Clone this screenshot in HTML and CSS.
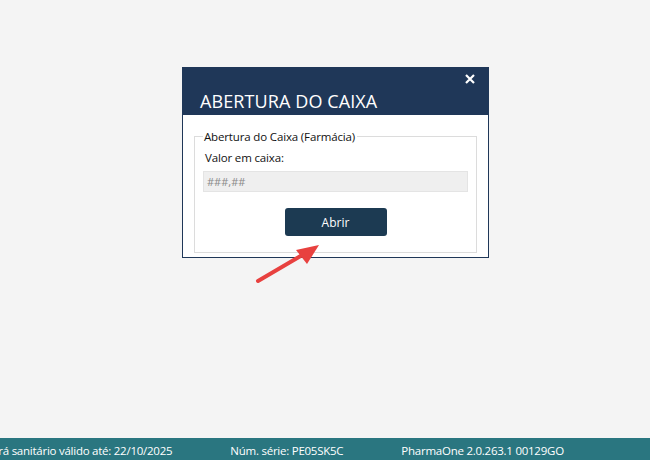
FILE: index.html
```html
<!DOCTYPE html>
<html lang="pt-BR">
<head>
    <meta charset="UTF-8">
    <title>Abertura do Caixa</title>
    <link rel="stylesheet" href="styles.css">
</head>
<body>
    <div class="desktop">
        <div class="dialog">
            <div class="dialog-header">
                <svg class="close" width="10" height="10" viewBox="0 0 10 10">
                    <path d="M1 1 L9 9 M9 1 L1 9" stroke="#fff" stroke-width="2.2"/>
                </svg>
                <div class="dialog-title">ABERTURA DO CAIXA</div>
            </div>
            <div class="dialog-body">
                <fieldset class="group">
                    <legend>Abertura do Caixa (Farmácia)</legend>
                    <label class="field-label">Valor em caixa:</label>
                    <div class="input">###,##</div>
                    <div class="actions">
                        <button class="btn">Abrir</button>
                    </div>
                </fieldset>
            </div>
        </div>

        <!-- annotation arrow -->
        <svg class="arrow" width="650" height="438" viewBox="0 0 650 438">
            <line x1="258" y1="281" x2="304" y2="254" stroke="#e8413f" stroke-width="4" stroke-linecap="round"/>
            <polygon points="319,245 296,250 307,264" fill="#e8413f"/>
        </svg>
    </div>

    <div class="statusbar">
        <span class="status-item first">Alvará sanitário válido até: 22/10/2025</span>
        <span class="status-item">Núm. série: PE05SK5C</span>
        <span class="status-item">PharmaOne 2.0.263.1 00129GO</span>
    </div>
</body>
</html>
```

FILE: styles.css
```css
html, body {
    margin: 0;
    height: 100%;
}
body {
    font-family: "Open Sans", "Noto Sans", sans-serif;
    background: #f4f4f4;
    display: flex;
    flex-direction: column;
    overflow: hidden;
}
.desktop {
    flex: 1;
    position: relative;
}
.dialog {
    width: 305px;
    margin: 67px 0 0 182px;
    background: #fff;
    border: 1px solid #1f3758;
}
.dialog-header {
    background: #1f3758;
    color: #fff;
    height: 47px;
    position: relative;
}
.close {
    position: absolute;
    right: 13px;
    top: 6px;
}
.dialog-title {
    padding: 23px 0 0 17px;
    font-size: 18px;
    line-height: 20px;
    letter-spacing: 0.1px;
}
.dialog-body {
    padding: 14px 11px 4px 11px;
}
.group {
    margin: 0;
    padding: 5px 8px 16px 8px;
    border: 1px solid #dcdcdc;
}
.group legend {
    font-size: 11.5px;
    letter-spacing: -0.15px;
    color: #111;
    padding: 0 2px 0 1px;
}
.field-label {
    display: block;
    font-size: 11.5px;
    letter-spacing: -0.15px;
    color: #111;
    margin: 0 0 5px 2px;
    line-height: 17px;
}
.input {
    height: 19px;
    background: #efefef;
    border: 1px solid #e4e4e4;
    color: #8a8a8a;
    font-size: 11px;
    line-height: 19px;
    padding-left: 3px;
}
.actions {
    display: flex;
    justify-content: center;
    margin-top: 16px;
}
.btn {
    width: 102px;
    height: 28px;
    background: #1c3a52;
    color: #fff;
    border: none;
    border-radius: 3px;
    font-family: inherit;
    font-size: 12px;
    padding: 0;
}
.arrow {
    position: absolute;
    left: 0;
    top: 0;
}
.statusbar {
    height: 22px;
    background: #2a7680;
    color: #fff;
    font-size: 11.5px;
    letter-spacing: -0.25px;
    display: flex;
    align-items: center;
    padding-top: 2px;
    box-sizing: border-box;
    gap: 58px;
    white-space: nowrap;
}
.status-item.first {
    margin-left: -23px;
}
```
